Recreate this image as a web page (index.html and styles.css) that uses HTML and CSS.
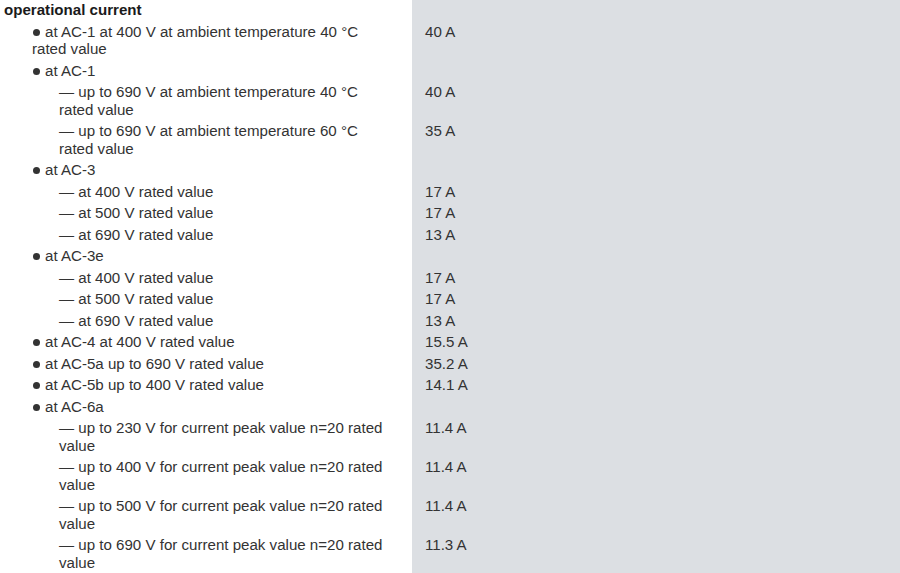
FILE: index.html
```html
<!DOCTYPE html>
<html>
<head>
<meta charset="utf-8">
<link rel="stylesheet" href="styles.css">
</head>
<body>
<div class="table">
  <div class="label head">operational current</div><div class="value"></div>
  <div class="label l1"><span class="dot"></span>at AC-1 at 400 V at ambient temperature 40 °C rated value</div><div class="value">40 A</div>
  <div class="label l1"><span class="dot"></span>at AC-1</div><div class="value"></div>
  <div class="label l2">— up to 690 V at ambient temperature 40 °C rated value</div><div class="value">40 A</div>
  <div class="label l2">— up to 690 V at ambient temperature 60 °C rated value</div><div class="value">35 A</div>
  <div class="label l1"><span class="dot"></span>at AC-3</div><div class="value"></div>
  <div class="label l2">— at 400 V rated value</div><div class="value">17 A</div>
  <div class="label l2">— at 500 V rated value</div><div class="value">17 A</div>
  <div class="label l2">— at 690 V rated value</div><div class="value">13 A</div>
  <div class="label l1"><span class="dot"></span>at AC-3e</div><div class="value"></div>
  <div class="label l2">— at 400 V rated value</div><div class="value">17 A</div>
  <div class="label l2">— at 500 V rated value</div><div class="value">17 A</div>
  <div class="label l2">— at 690 V rated value</div><div class="value">13 A</div>
  <div class="label l1"><span class="dot"></span>at AC-4 at 400 V rated value</div><div class="value">15.5 A</div>
  <div class="label l1"><span class="dot"></span>at AC-5a up to 690 V rated value</div><div class="value">35.2 A</div>
  <div class="label l1"><span class="dot"></span>at AC-5b up to 400 V rated value</div><div class="value">14.1 A</div>
  <div class="label l1"><span class="dot"></span>at AC-6a</div><div class="value"></div>
  <div class="label l2">— up to 230 V for current peak value n=20 rated value</div><div class="value">11.4 A</div>
  <div class="label l2">— up to 400 V for current peak value n=20 rated value</div><div class="value">11.4 A</div>
  <div class="label l2">— up to 500 V for current peak value n=20 rated value</div><div class="value">11.4 A</div>
  <div class="label l2">— up to 690 V for current peak value n=20 rated value</div><div class="value">11.3 A</div>
</div>
</body>
</html>
```

FILE: styles.css
```css
html, body {
  margin: 0;
  padding: 0;
  background: #ffffff;
}
body {
  font-family: "Liberation Sans", Arial, sans-serif;
  font-size: 15.1px;
  line-height: 17.5px;
  color: #333333;
  height: 573px;
  overflow: hidden;
}
.table {
  display: grid;
  grid-template-columns: 412px 1fr;
  margin-top: -1px;
  background: linear-gradient(to right, #ffffff 412px, #dcdfe3 412px);
  min-height: 600px;
  align-content: start;
}
.label {
  padding: 2px 24px 2px 4px;
}
.head {
  font-weight: bold;
  color: #1a1a1a;
}
.l1 {
  padding-left: 32px;
}
.l2 {
  padding-left: 59px;
}
.dot {
  display: inline-block;
  width: 7px;
  height: 7px;
  border-radius: 50%;
  background: #333333;
  margin: 0 5px 0 1px;
  vertical-align: 1px;
}
.value {
  padding: 2px 0 2px 13px;
}
```
